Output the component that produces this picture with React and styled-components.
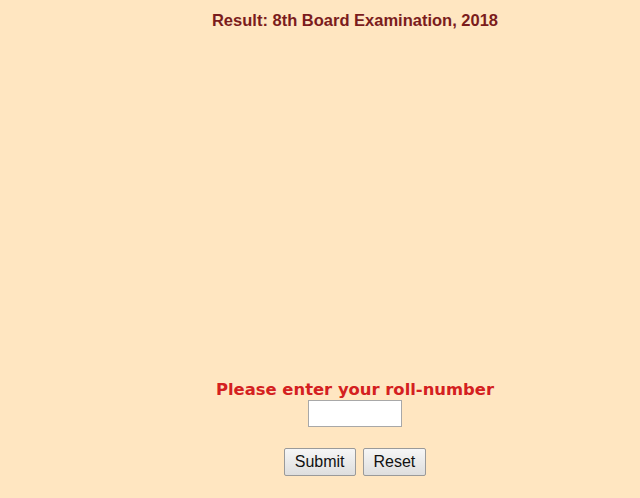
import React from 'react';
import styled, { createGlobalStyle } from 'styled-components';

const GlobalStyle = createGlobalStyle`
  html, body {
    margin: 0;
    padding: 0;
    background: #ffe6c1;
  }
  body {
    overflow: hidden;
  }
`;

const Page = styled.div`
  display: flex;
  flex-direction: column;
  align-items: center;
  min-height: 498px;
  padding-left: 70px;
  box-sizing: border-box;
  background: #ffe6c1;
`;

const Title = styled.h1`
  margin: 10px 0 0;
  font-family: 'Liberation Sans', Arial, sans-serif;
  font-size: 16.5px;
  font-weight: bold;
  line-height: 20px;
  color: #7b1c1c;
`;

const Form = styled.form`
  display: flex;
  flex-direction: column;
  align-items: center;
  margin-top: 350px;
`;

const Prompt = styled.label`
  font-family: Verdana, 'DejaVu Sans', sans-serif;
  font-size: 16.4px;
  font-weight: bold;
  line-height: 19px;
  color: #d42020;
`;

const RollInput = styled.input`
  width: 94px;
  height: 27px;
  box-sizing: border-box;
  margin-top: 1px;
  border: 1px solid #a8a8a8;
  background: #fff;
`;

const Buttons = styled.div`
  display: flex;
  gap: 7px;
  margin-top: 21px;
`;

const Button = styled.button`
  height: 28px;
  padding: 0 10px;
  font-family: 'Liberation Sans', Arial, sans-serif;
  font-size: 16px;
  color: #111;
  border: 1px solid #9a9a9a;
  border-radius: 2px;
  background: linear-gradient(#f6f6f6, #dedede);
`;

export default function App() {
  return (
    <>
      <GlobalStyle />
      <Page>
        <Title>Result: 8th Board Examination, 2018</Title>
        <Form onSubmit={(e) => e.preventDefault()}>
          <Prompt htmlFor="roll">Please enter your roll-number</Prompt>
          <RollInput id="roll" type="text" />
          <Buttons>
            <Button type="submit">Submit</Button>
            <Button type="reset">Reset</Button>
          </Buttons>
        </Form>
      </Page>
    </>
  );
}
